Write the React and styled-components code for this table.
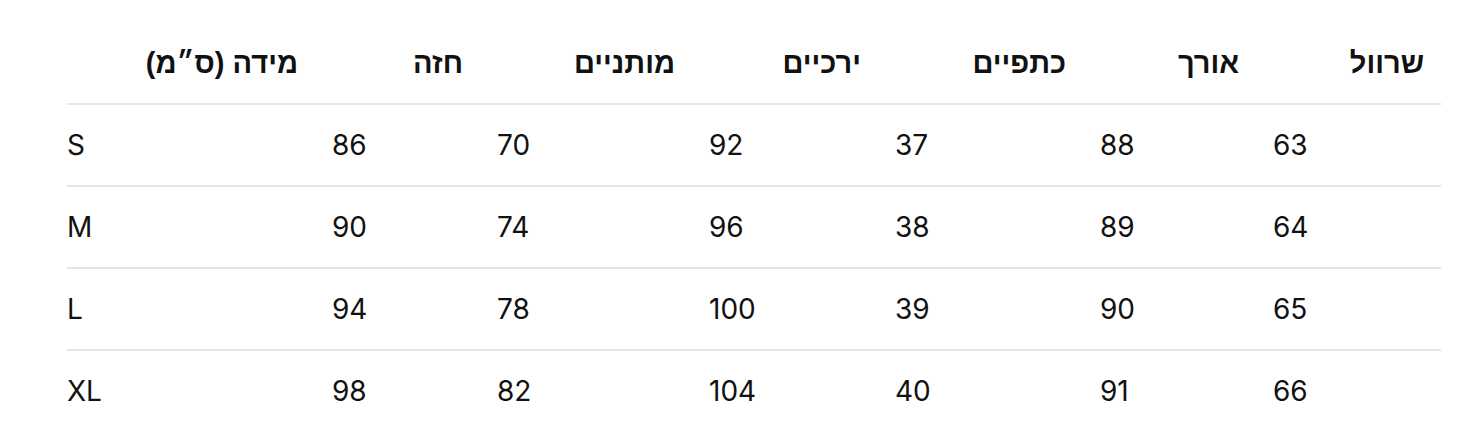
import React from "react";
import styled, { createGlobalStyle } from "styled-components";

const Global = createGlobalStyle`
  html, body { margin: 0; padding: 0; background: #ffffff; }
  body { font-family: Inter, "Liberation Sans", Arial, sans-serif; color: #111111; }
`;

const Page = styled.div`
  padding: 23px 18px 0 67px;
`;

const Table = styled.table`
  border-collapse: separate;
  border-spacing: 0;
  table-layout: fixed;
  width: 1374px;
  font-size: 28px;
  line-height: 32px;
`;

const Col = styled.col`
  width: ${(p) => p.$w}px;
`;

const Th = styled.th`
  text-align: right;
  direction: rtl;
  font-family: "Liberation Sans", Arial, sans-serif;
  font-size: 29px;
  font-weight: 700;
  padding: 24px 17px 24px 0;
  border-bottom: 2px solid #e6e6e6;
  white-space: nowrap;
`;

const Td = styled.td`
  text-align: left;
  font-weight: 400;
  padding: 24px 0 24px ${(p) => (p.$first ? 0 : 17)}px;
  border-bottom: ${(p) => (p.$last ? "none" : "2px solid #e6e6e6")};
  white-space: nowrap;
`;

const widths = [248, 165, 212, 186, 205, 173, 185];
const headers = ["מידה (ס״מ)", "חזה", "מותניים", "ירכיים", "כתפיים", "אורך", "שרוול"];
const rows = [
  ["S", "86", "70", "92", "37", "88", "63"],
  ["M", "90", "74", "96", "38", "89", "64"],
  ["L", "94", "78", "100", "39", "90", "65"],
  ["XL", "98", "82", "104", "40", "91", "66"],
];

export default function App() {
  return (
    <>
      <Global />
      <Page>
        <Table>
          <colgroup>
            {widths.map((w, i) => (
              <Col key={i} $w={w} />
            ))}
          </colgroup>
          <thead>
            <tr>
              {headers.map((h) => (
                <Th key={h}>{h}</Th>
              ))}
            </tr>
          </thead>
          <tbody>
            {rows.map((r, ri) => (
              <tr key={r[0]}>
                {r.map((c, ci) => (
                  <Td key={ci} $first={ci === 0} $last={ri === rows.length - 1}>
                    {c}
                  </Td>
                ))}
              </tr>
            ))}
          </tbody>
        </Table>
      </Page>
    </>
  );
}
